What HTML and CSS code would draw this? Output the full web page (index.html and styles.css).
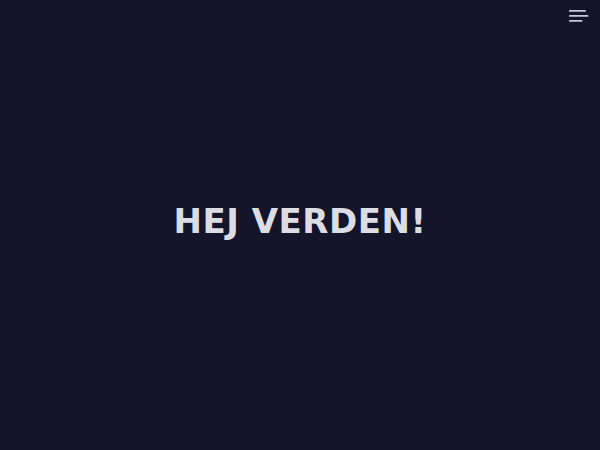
FILE: index.html
```html
<!DOCTYPE html>
<html lang="da">
<head>
<meta charset="utf-8">
<title>Hej verden</title>
<link rel="stylesheet" href="styles.css">
</head>
<body>
<div class="page">
  <header class="topbar">
    <button class="menu" aria-label="Menu">
      <svg width="20" height="14" viewBox="0 0 20 14">
        <rect x="0" y="1" width="17" height="1.8" rx="0.9" fill="#c9c9d6"/>
        <rect x="0" y="6" width="19.5" height="1.8" rx="0.9" fill="#c9c9d6"/>
        <rect x="0" y="11" width="13.5" height="1.8" rx="0.9" fill="#c9c9d6"/>
      </svg>
    </button>
  </header>
  <main class="hero">
    <h1 class="title">HEJ VERDEN!</h1>
  </main>
</div>
</body>
</html>
```
FILE: styles.css
```css
html, body {
  margin: 0;
  padding: 0;
  background: #14152a;
}
.page {
  height: 450px;
  display: flex;
  flex-direction: column;
  position: relative;
}
.topbar {
  position: absolute;
  top: 0;
  right: 0;
  padding: 9px 11px 0 0;
}
.menu {
  background: none;
  border: 0;
  padding: 0;
  display: block;
}
.menu svg { display: block; }
.hero {
  flex: 1;
  display: flex;
  align-items: center;
  justify-content: center;
  padding-bottom: 9px;
}
.title {
  margin: 0;
  font-family: "DejaVu Sans", sans-serif;
  font-weight: bold;
  font-size: 34px;
  color: #dcdce4;
  letter-spacing: 0.5px;
  line-height: 1;
}
```
